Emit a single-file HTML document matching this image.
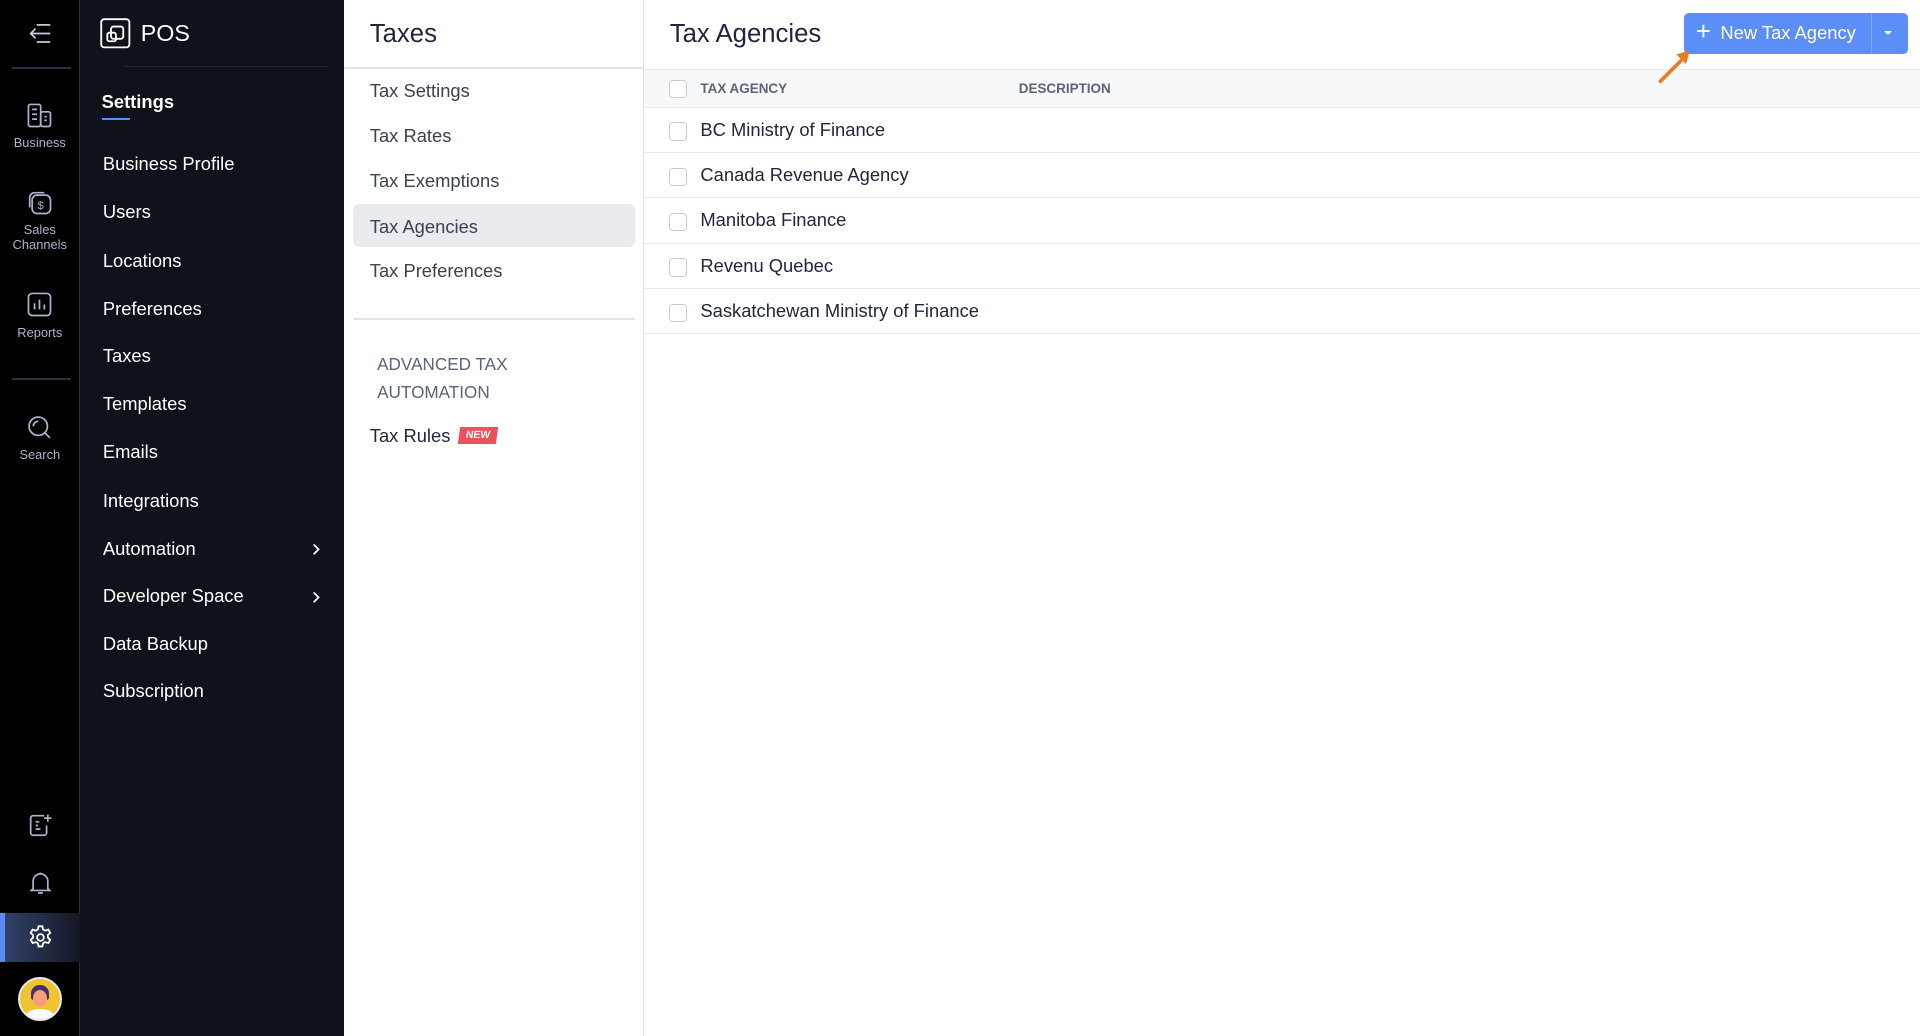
<!DOCTYPE html>
<html><head><meta charset="utf-8"><style>
*{margin:0;padding:0;box-sizing:border-box}
html,body{width:1920px;height:1036px;overflow:hidden;background:#fff}
#w{zoom:1.22449;width:1568px;height:846px;position:relative;font-family:"Liberation Sans",sans-serif;color:#21263c}
.abs{position:absolute}
#rail{left:0;top:0;width:65px;height:846px;background:#000;border-right:1px solid #2a2f3d}
#rail .it{position:absolute;left:0;width:65px;text-align:center;color:#aab4cc;font-size:10.5px;line-height:12px}
#rail svg{display:block;margin:0 auto 6px}
#nav{left:65px;top:0;width:216px;height:846px;background:#0f121a;color:#fff}
#nav .n{position:absolute;left:19px;font-size:15px}
#tp{left:281px;top:0;width:245px;height:846px;background:#fff;border-right:1px solid #e3e5ea}
#tp .t{position:absolute;left:21px;font-size:15px;color:#3b4151}
.row{position:absolute;left:526px;width:1042px;height:37px;border-bottom:1px solid #e6e8ec;font-size:15px}
.cb{position:absolute;left:20px;width:15px;height:15px;border:1px solid #c9ccd4;border-radius:3px;background:#fff}
</style></head><body><div id="w">
<div id="rail" class="abs">
 <svg class="abs" style="left:22px;top:16px" width="22" height="22" viewBox="0 0 22 22" fill="none" stroke="#c4cad8" stroke-width="1.4"><path d="M8 4h11M4 11h15M8 18h11M7 7l-4 4 4 4"/></svg>
 <div class="abs" style="left:10px;top:55px;width:48px;height:1px;background:#2a2f3d"></div>
 <div class="it" style="top:83px"><svg width="22" height="22" viewBox="0 0 22 22" fill="none" stroke="#aab4cc" stroke-width="1.4"><rect x="2" y="2" width="10" height="18" rx="1.5"/><rect x="12" y="8" width="8" height="12" rx="1.5"/><path d="M5 6h4M5 10h4M5 14h4M15 12h2M15 15h2"/></svg>Business</div>
 <div class="it" style="top:154px"><svg width="22" height="22" viewBox="0 0 22 22" fill="none" stroke="#aab4cc" stroke-width="1.4"><rect x="5" y="5" width="15" height="15" rx="4"/><path d="M3 15V7a4 4 0 014-4h8"/><text x="9.5" y="16.5" font-size="9" fill="#aab4cc" stroke="none" font-family="Liberation Sans">$</text></svg>Sales<br>Channels</div>
 <div class="it" style="top:238px"><svg width="22" height="22" viewBox="0 0 22 22" fill="none" stroke="#aab4cc" stroke-width="1.4"><rect x="2" y="2" width="18" height="18" rx="3"/><path d="M7 15V10M11 15V7M15 15V11"/></svg>Reports</div>
 <div class="abs" style="left:10px;top:309px;width:48px;height:1px;background:#2a2f3d"></div>
 <div class="it" style="top:338px"><svg width="22" height="22" viewBox="0 0 22 22" fill="none" stroke="#aab4cc" stroke-width="1.4"><circle cx="10" cy="10" r="7.5"/><path d="M15.5 15.5l4 4M6 10a4 4 0 014-4"/></svg>Search</div>
 <svg class="abs" style="left:22px;top:663px" width="22" height="22" viewBox="0 0 22 22" fill="none" stroke="#aab4cc" stroke-width="1.4"><path d="M14 3H5a2 2 0 00-2 2v12a2 2 0 002 2h9a2 2 0 002-2v-6"/><path d="M7 8h3M7 11h2M7 14h4M17 2v6M14 5h6"/></svg>
 <svg class="abs" style="left:22px;top:710px" width="22" height="22" viewBox="0 0 22 22" fill="none" stroke="#aab4cc" stroke-width="1.4"><path d="M5 16V10a6 6 0 0112 0v6l1.5 1.5h-15z"/><path d="M9 19.5h4M11 3v1"/></svg>
 <div class="abs" style="left:0;top:746px;width:65px;height:40px;background:linear-gradient(90deg,#33446e,#141824)"></div>
 <div class="abs" style="left:0;top:746px;width:4px;height:40px;background:#5b8cf5"></div>
 <svg class="abs" style="left:22px;top:755px" width="22" height="22" viewBox="0 0 24 24" fill="none" stroke="#fff" stroke-width="1.6"><circle cx="12" cy="12" r="3"/><path d="M10.3 2h3.4l.6 2.8 2 1.1 2.7-.9 1.7 2.9-2.1 1.9v2.4l2.1 1.9-1.7 2.9-2.7-.9-2 1.1-.6 2.8h-3.4l-.6-2.8-2-1.1-2.7.9-1.7-2.9 2.1-1.9v-2.4L3.3 7.9 5 5l2.7.9 2-1.1z"/></svg>
 <div class="abs" style="left:15px;top:798px;width:36px;height:36px;border-radius:50%;background:#f0c330;border:2px solid #e6e8ee;overflow:hidden">
  <div class="abs" style="left:9px;top:5px;width:14px;height:12px;border-radius:7px 7px 2px 2px;background:#4a2d6e"></div>
  <div class="abs" style="left:10px;top:9px;width:12px;height:14px;border-radius:50%;background:#f5a27a"></div>
  <div class="abs" style="left:4px;top:24px;width:24px;height:14px;border-radius:50%;background:#fff"></div>
 </div>
</div>
<div id="nav" class="abs">
 <svg class="abs" style="left:17px;top:15px" width="26" height="26" viewBox="0 0 26 26" fill="none" stroke="#fff" stroke-width="1.5"><rect x="1" y="1" width="23" height="23" rx="2.5"/><rect x="9" y="7" width="10" height="10" rx="2"/><rect x="6" y="12" width="7" height="7" rx="1.5"/></svg>
 <div class="abs" style="left:50px;top:16px;font-size:19px">POS</div>
 <div class="abs" style="left:36px;top:54px;width:168px;height:1px;background:#1f2430"></div>
 <div class="abs" style="left:18px;top:74px;font-size:15px;font-weight:bold">Settings</div>
 <div class="abs" style="left:18px;top:96px;width:23px;height:2px;background:#5b8cf5"></div>
 <div class="n" style="top:125px">Business Profile</div>
 <div class="n" style="top:164px">Users</div>
 <div class="n" style="top:204px">Locations</div>
 <div class="n" style="top:243px">Preferences</div>
 <div class="n" style="top:282px">Taxes</div>
 <div class="n" style="top:321px">Templates</div>
 <div class="n" style="top:360px">Emails</div>
 <div class="n" style="top:400px">Integrations</div>
 <div class="n" style="top:439px">Automation</div>
 <div class="n" style="top:478px">Developer Space</div>
 <div class="n" style="top:517px">Data Backup</div>
 <div class="n" style="top:555px">Subscription</div>
 <svg class="abs" style="left:188px;top:443px" width="10" height="12" viewBox="0 0 10 12" fill="none" stroke="#fff" stroke-width="1.4"><path d="M3 2l4 4-4 4"/></svg>
 <svg class="abs" style="left:188px;top:482px" width="10" height="12" viewBox="0 0 10 12" fill="none" stroke="#fff" stroke-width="1.4"><path d="M3 2l4 4-4 4"/></svg>
</div>
<div id="tp" class="abs">
 <div class="abs" style="left:21px;top:16px;font-size:21px;color:#21263c">Taxes</div>
 <div class="abs" style="left:0;top:55px;width:244px;height:1px;background:#e3e5ea"></div>
 <div class="t" style="top:65px">Tax Settings</div>
 <div class="t" style="top:102px">Tax Rates</div>
 <div class="t" style="top:139px">Tax Exemptions</div>
 <div class="abs" style="left:7px;top:167px;width:231px;height:35px;background:#e9ebef;border-radius:5px"></div>
 <div class="t" style="top:176px">Tax Agencies</div>
 <div class="t" style="top:212px">Tax Preferences</div>
 <div class="abs" style="left:7px;top:260px;width:231px;height:1px;background:#e3e5ea"></div>
 <div class="abs" style="left:27px;top:286px;font-size:14px;line-height:23px;color:#5b6378">ADVANCED TAX<br>AUTOMATION</div>
 <div class="t" style="top:347px;color:#21263c">Tax Rules</div>
 <div class="abs" style="left:94px;top:349px;width:31px;height:14px;background:#f0505e;color:#fff;font-size:8.5px;font-weight:bold;line-height:14px;text-align:center;transform:skewX(-8deg)">NEW</div>
</div>
<div class="abs" style="left:547px;top:16px;font-size:21px">Tax Agencies</div>
<div class="abs" style="left:1375px;top:11px;width:183px;height:33px;background:#5b8ef7;border-radius:4px;color:#fff;font-size:15px;line-height:33px">
 <span style="position:absolute;left:10px;top:-1px;font-size:21px">+</span>
 <span style="position:absolute;left:30px">New Tax Agency</span>
 <div class="abs" style="left:153px;top:0;width:1px;height:33px;background:#7ea6f9"></div>
 <div class="abs" style="left:164px;top:14px;border:4px solid transparent;border-top:4px solid #fff"></div>
</div>
<div class="abs" style="left:526px;top:56px;width:1042px;height:32px;background:#f7f8fa;border-top:1px solid #e6e8ec;border-bottom:1px solid #e6e8ec"></div>
<div class="cb" style="left:546px;top:65px;position:absolute"></div>
<div class="abs" style="left:572px;top:66px;font-size:11px;font-weight:bold;color:#5b6378">TAX AGENCY</div>
<div class="abs" style="left:832px;top:66px;font-size:11px;font-weight:bold;color:#5b6378">DESCRIPTION</div>
<div class="row" style="top:88px"><div class="cb" style="top:12px"></div><span class="abs" style="left:46px;top:9px">BC Ministry of Finance</span></div>
<div class="row" style="top:125px"><div class="cb" style="top:12px"></div><span class="abs" style="left:46px;top:9px">Canada Revenue Agency</span></div>
<div class="row" style="top:162px"><div class="cb" style="top:12px"></div><span class="abs" style="left:46px;top:9px">Manitoba Finance</span></div>
<div class="row" style="top:199px"><div class="cb" style="top:12px"></div><span class="abs" style="left:46px;top:9px">Revenu Quebec</span></div>
<div class="row" style="top:236px"><div class="cb" style="top:12px"></div><span class="abs" style="left:46px;top:9px">Saskatchewan Ministry of Finance</span></div>
<svg class="abs" style="left:1350px;top:38px" width="34" height="34" viewBox="0 0 34 34"><path d="M6 28L24 10" stroke="#ec7a22" stroke-width="3" stroke-linecap="round"/><path d="M30 3l-11 3 8 8z" fill="#ec7a22"/></svg>
</div></body></html>
